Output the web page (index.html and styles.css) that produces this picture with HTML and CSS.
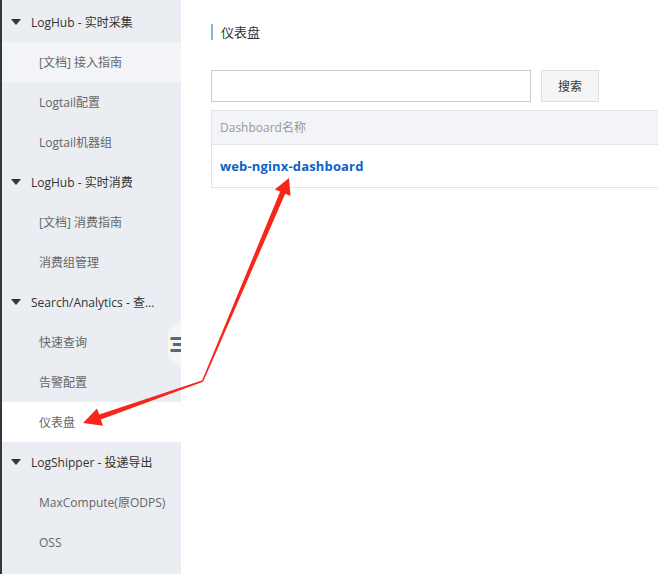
FILE: index.html
```html
<!DOCTYPE html>
<html>
<head>
    <meta charset="UTF-8">
    <title>仪表盘</title>
    <link rel="stylesheet" href="styles.css">
</head>
<body>
    <div class="page">
        <div class="sidebar">
            <div class="nav-group">LogHub - 实时采集</div>
            <div class="nav-item hover">[文档] 接入指南</div>
            <div class="nav-item">Logtail配置</div>
            <div class="nav-item">Logtail机器组</div>
            <div class="nav-group">LogHub - 实时消费</div>
            <div class="nav-item">[文档] 消费指南</div>
            <div class="nav-item">消费组管理</div>
            <div class="nav-group">Search/Analytics - 查询分析</div>
            <div class="nav-item">快速查询</div>
            <div class="nav-item">告警配置</div>
            <div class="nav-item active">仪表盘</div>
            <div class="nav-group">LogShipper - 投递导出</div>
            <div class="nav-item">MaxCompute(原ODPS)</div>
            <div class="nav-item">OSS</div>

            <div class="collapse-tab">
                <span class="bar"></span>
                <span class="bar mid"></span>
                <span class="bar"></span>
            </div>
        </div>

        <div class="main">
            <div class="page-title">仪表盘</div>
            <div class="search-row">
                <input type="text" class="search-input">
                <button class="search-btn">搜索</button>
            </div>
            <div class="table">
                <div class="table-head">Dashboard名称</div>
                <div class="table-row"><a href="#">web-nginx-dashboard</a></div>
            </div>
        </div>
    </div>

    <!-- 标注箭头 -->
    <svg class="arrows" width="658" height="574" viewBox="0 0 658 574">
        <polygon fill="#f7261b" points="289,178 290.5,196 285.2,193.8 203.3,381.4 202.1,380.6 280.2,191.6 274.8,189.4"/>
        <polygon fill="#f7261b" points="83,423 97,408.5 99.2,414.6 202.6,380.3 203,381.8 100.8,419.4 103,425.8"/>
    </svg>
</body>
</html>
```

FILE: styles.css
```css
body {
    margin: 0;
    font-family: "Open Sans", "Noto Sans CJK SC", sans-serif;
    font-size: 12px;
    color: #333;
    background-color: #ffffff;
    overflow: hidden;
}
.page {
    display: flex;
    height: 574px;
}
.sidebar {
    position: relative;
    width: 179px;
    flex-shrink: 0;
    padding-top: 2px;
    background-color: #eaedf1;
    border-left: 2px solid #33383e;
}
.nav-group,
.nav-item {
    height: 40px;
    line-height: 42px;
    white-space: nowrap;
    overflow: hidden;
    text-overflow: ellipsis;
}
.nav-group {
    position: relative;
    padding: 0 20px 0 29px;
    color: #333;
}
.nav-group::before {
    content: "";
    position: absolute;
    left: 9px;
    top: 17px;
    border-left: 5px solid transparent;
    border-right: 5px solid transparent;
    border-top: 6px solid #333;
}
.nav-item {
    padding-left: 37px;
    color: #666;
}
.nav-item.hover {
    background-color: #f3f4f7;
}
.nav-item.active {
    background-color: #ffffff;
}
.collapse-tab {
    position: absolute;
    right: 0;
    top: 320px;
    width: 13px;
    height: 48px;
    background-color: #f5f6f8;
    clip-path: polygon(0 22%, 100% 0, 100% 100%, 0 78%);
    display: flex;
    flex-direction: column;
    justify-content: center;
    align-items: flex-end;
    gap: 3px;
}
.collapse-tab .bar {
    display: block;
    width: 10px;
    height: 3px;
    background-color: #5b6776;
    border-left: 1px solid #f0a24b;
}
.collapse-tab .bar.mid {
    width: 8px;
    border-left: 2px solid #f3f4f7;
}
.main {
    flex: 1;
    padding: 24px 0 0 30px;
    overflow: hidden;
}
.page-title {
    height: 16px;
    line-height: 16px;
    padding-left: 8px;
    border-left: 2px solid #88b6df;
    font-size: 13px;
    color: #333;
}
.search-row {
    display: flex;
    margin-top: 30px;
    height: 32px;
}
.search-input {
    width: 320px;
    height: 32px;
    box-sizing: border-box;
    border: 1px solid #cccccc;
    margin: 0;
    padding: 0 8px;
}
.search-btn {
    margin-left: 10px;
    width: 58px;
    height: 32px;
    border: 1px solid #dddddd;
    background-color: #f5f5f5;
    font-family: "Open Sans", "Noto Sans CJK SC", sans-serif;
    font-size: 12px;
    color: #333;
}
.table {
    margin-top: 8px;
    width: 520px;
    border: 1px solid #e2e4e8;
    border-top: 0;
}
.table-head {
    height: 33px;
    line-height: 33px;
    padding-left: 8px;
    background-color: #f3f4f8;
    border-top: 1px solid #e2e4e8;
    border-bottom: 1px solid #e2e4e8;
    color: #999;
}
.table-row {
    height: 42px;
    line-height: 42px;
    padding-left: 8px;
}
.table-row a {
    color: #0b63c6;
    font-weight: bold;
    font-size: 13px;
    letter-spacing: 0.15px;
    text-decoration: none;
}
.arrows {
    position: absolute;
    left: 0;
    top: 0;
    pointer-events: none;
}
```
